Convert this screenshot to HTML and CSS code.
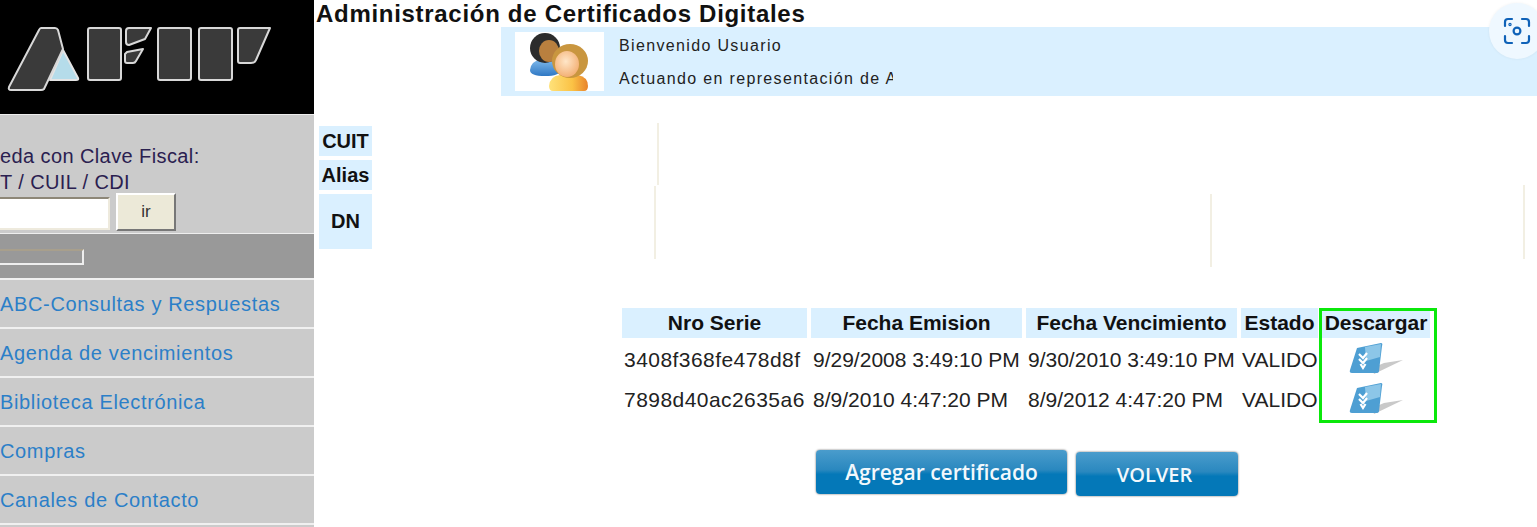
FILE: index.html
```html
<!DOCTYPE html>
<html lang="es">
<head>
    <meta charset="UTF-8">
    <title>Administración de Certificados Digitales</title>
    <link rel="stylesheet" href="styles.css">
</head>
<body>
    <div class="page">
        <aside class="sidebar">
            <div class="logo">
                <svg width="290" height="114" viewBox="0 0 290 114">
                    <g fill="#3a3a3a" stroke="#d8d8d8" stroke-width="2" stroke-linejoin="round">
                        <path d="M63 50L78 78Q79 80 76 80H50Z" fill="#b5dcea" stroke="#e4e4e4"/>
                        <path d="M41 28H55Q57 28 58 30L63 49L44 89Q43 90 41 90H11Q8 90 9 87L39 30Q40 28 41 28Z"/>
                        <path d="M90 28H119Q121 28 121 30V78Q121 80 119 80H90Q88 80 88 78V30Q88 28 90 28Z"/>
                        <path d="M129 28H151L145 39L129 45Q126 45 126 42V31Q126 28 129 28Z"/>
                        <path d="M127 52L143 49L136 61Q135 63 133 63H127Q125 63 125 61V54Z"/>
                        <path d="M160 28H189Q191 28 191 30V78Q191 80 189 80H160Q158 80 158 78V30Q158 28 160 28Z"/>
                        <path d="M201 28H230Q232 28 232 30V78Q232 80 230 80H201Q199 80 199 78V30Q199 28 201 28Z"/>
                        <path d="M240 28H270L256 60Q255 63 251 63H240Q238 63 238 61V30Q238 28 240 28Z"/>
                    </g>
                </svg>
            </div>
            <form class="search">
                <div class="search-label">eda con Clave Fiscal:</div>
                <div class="search-label">T / CUIL / CDI</div>
                <div class="search-row">
                    <input class="search-input" type="text">
                    <button class="search-btn" type="button">ir</button>
                </div>
            </form>
            <div class="band"><div class="band-field"></div></div>
            <nav class="menu">
                <a class="menu-item">ABC-Consultas y Respuestas</a>
                <a class="menu-item">Agenda de vencimientos</a>
                <a class="menu-item">Biblioteca Electrónica</a>
                <a class="menu-item">Compras</a>
                <a class="menu-item">Canales de Contacto</a>
                <a class="menu-item"></a>
            </nav>
        </aside>

        <main class="content">
            <h1 class="title">Administración de Certificados Digitales</h1>
            <div class="welcome">
                <div class="avatar">
                    <svg width="64" height="59" viewBox="0 0 64 59">
                        <defs>
                            <linearGradient id="blueBody" x1="0" y1="0" x2="0" y2="1">
                                <stop offset="0" stop-color="#7db8ea"/>
                                <stop offset="1" stop-color="#2f78c4"/>
                            </linearGradient>
                            <linearGradient id="orangeBody" x1="0" y1="0" x2="1" y2="0">
                                <stop offset="0" stop-color="#ffe27a"/>
                                <stop offset="0.6" stop-color="#fbc245"/>
                                <stop offset="1" stop-color="#e8822a"/>
                            </linearGradient>
                            <radialGradient id="skin" cx="0.45" cy="0.4" r="0.7">
                                <stop offset="0" stop-color="#ffe6c8"/>
                                <stop offset="1" stop-color="#f2a868"/>
                            </radialGradient>
                        </defs>
                        <path d="M4 38Q5 29 14 28H26Q34 30 34 38Q34 44 19 44Q4 44 4 38Z" fill="url(#blueBody)"/>
                        <ellipse cx="19" cy="16" rx="15" ry="15" fill="#2c2c2c"/>
                        <ellipse cx="23" cy="19" rx="10" ry="11" fill="#b9803f"/>
                        <path d="M27 59Q23 59 23 54Q24 44 34 43H52Q62 45 62 54Q62 59 58 59Z" fill="url(#orangeBody)"/>
                        <ellipse cx="44" cy="29" rx="18" ry="17" fill="#c9963f"/>
                        <ellipse cx="41" cy="32" rx="12" ry="13" fill="url(#skin)"/>
                    </svg>
                </div>
                <div class="welcome-text">
                    <div>Bienvenido Usuario</div>
                    <div class="clip">Actuando en representación de A</div>
                </div>
            </div>

            <div class="info">
                <div class="info-labels">
                    <div class="info-label">CUIT</div>
                    <div class="info-label">Alias</div>
                    <div class="info-label info-label-dn">DN</div>
                </div>
                <div class="info-lines">
                    <span class="vline vline-a"></span>
                    <span class="vline vline-b"></span>
                    <span class="vline vline-c"></span>
                    <span class="vline vline-d"></span>
                </div>
            </div>

            <div class="certs">
                <table class="cert-table">
                    <thead>
                        <tr>
                            <th class="col-serie">Nro Serie</th>
                            <th class="col-fecha">Fecha Emision</th>
                            <th class="col-fecha">Fecha Vencimiento</th>
                            <th class="col-estado">Estado</th>
                            <th class="col-desc">Descargar</th>
                        </tr>
                    </thead>
                    <tbody>
                        <tr>
                            <td class="cell-serie">3408f368fe478d8f</td>
                            <td>9/29/2008 3:49:10 PM</td>
                            <td>9/30/2010 3:49:10 PM</td>
                            <td class="cell-estado">VALIDO</td>
                            <td class="cell-icon">
                                <svg width="56" height="34" viewBox="0 0 56 34">
                                    <path d="M26 31L55 17L36 20L24 25Z" fill="#c9c9c9"/>
                                    <path d="M9 5L33 0Q35 0 34 3L31 28Q31 30 28 30H4Q1 30 2 27Z" fill="#4e9fd3"/>
                                    <path d="M17 4L33 1L32 14L18 18Z" fill="#8cc6e8"/>
                                    <path d="M11 11L15 15L19 10M11 16L15 20L19 15M12.500 21L15 25L17.500 21" fill="none" stroke="#fff" stroke-width="2.200"/>
                                </svg>
                            </td>
                        </tr>
                        <tr>
                            <td class="cell-serie">7898d40ac2635a6</td>
                            <td>8/9/2010 4:47:20 PM</td>
                            <td>8/9/2012 4:47:20 PM</td>
                            <td class="cell-estado">VALIDO</td>
                            <td class="cell-icon">
                                <svg width="56" height="34" viewBox="0 0 56 34">
                                    <path d="M26 31L55 17L36 20L24 25Z" fill="#c9c9c9"/>
                                    <path d="M9 5L33 0Q35 0 34 3L31 28Q31 30 28 30H4Q1 30 2 27Z" fill="#4e9fd3"/>
                                    <path d="M17 4L33 1L32 14L18 18Z" fill="#8cc6e8"/>
                                    <path d="M11 11L15 15L19 10M11 16L15 20L19 15M12.500 21L15 25L17.500 21" fill="none" stroke="#fff" stroke-width="2.200"/>
                                </svg>
                            </td>
                        </tr>
                    </tbody>
                </table>
                <div class="highlight"></div>
            </div>

            <div class="actions">
                <button class="btn btn-add" type="button">Agregar certificado</button>
                <button class="btn btn-back" type="button">VOLVER</button>
            </div>
        </main>
    </div>

    <button class="capture" type="button" aria-label="capture">
        <svg width="28" height="28" viewBox="0 0 28 28" fill="none" stroke="#0f62b8" stroke-width="2.2" stroke-linecap="round">
            <path d="M2 9V5Q2 2 5 2H9M19 2H23Q26 2 26 5V9M26 19V23Q26 26 23 26H19M9 26H5Q2 26 2 23V19"/>
            <circle cx="14" cy="14" r="3.4"/>
            <circle cx="7" cy="7.5" r="0.6"/>
        </svg>
    </button>
</body>
</html>
```

FILE: styles.css
```css
html, body {
    margin: 0;
    padding: 0;
    height: 527px;
    overflow: hidden;
    background-color: #fff;
    font-family: "Liberation Sans", Arial, sans-serif;
    color: #111;
}

.page {
    display: flex;
    height: 527px;
}

/* left column */
.sidebar {
    width: 314px;
    flex-shrink: 0;
    overflow: hidden;
    background-color: #cbcbcb;
}

.logo {
    height: 114px;
    background-color: #000;
    border-bottom: 1px solid #eee;
}

.logo svg {
    display: block;
}

.search {
    height: 118px;
    padding-top: 28px;
    box-sizing: border-box;
    font-size: 20px;
    letter-spacing: 0.4px;
    color: #2a2050;
}

.search-label {
    line-height: 26px;
}

.search-row {
    display: flex;
    gap: 6px;
    margin-top: 2px;
}

.search-input {
    width: 110px;
    height: 33px;
    box-sizing: border-box;
    padding: 0;
    background-color: #fff;
    border: 2px solid #eeeadd;
    border-top-color: #8d8778;
    border-left: none;
}

.search-btn {
    width: 60px;
    height: 38px;
    margin-top: -4px;
    padding: 0;
    font-family: inherit;
    font-size: 17px;
    color: #333;
    background-color: #ece9d8;
    border: 2px solid #ece9d8;
    border-right-color: #777;
    border-bottom-color: #777;
    border-top-color: #fff;
    border-left-color: #fff;
}

.band {
    height: 45px;
    box-sizing: border-box;
    padding-top: 15px;
    background-color: #999;
    border-top: 1px solid #eee;
}

.band-field {
    width: 84px;
    height: 16px;
    box-sizing: border-box;
    border: 2px solid #eee;
    border-left: none;
    border-top-color: #a89f8c;
}

.menu-item {
    display: block;
    height: 47px;
    margin-top: 2px;
    line-height: 49px;
    background-color: #cbcbcb;
    box-shadow: 0 -2px 0 #f0f0f0;
    font-size: 20px;
    letter-spacing: 0.65px;
    color: #2b7fc8;
    white-space: nowrap;
}

/* right column */
.content {
    flex: 1;
    min-width: 0;
}

.title {
    margin: 0;
    height: 27px;
    padding-left: 2px;
    font-size: 24px;
    line-height: 27px;
    font-weight: bold;
    letter-spacing: 0.7px;
    white-space: nowrap;
}

.welcome {
    display: flex;
    height: 69px;
    margin-left: 187px;
    box-sizing: border-box;
    padding: 5px 0 0 14px;
    background-color: #daf0ff;
}

.avatar {
    display: flex;
    justify-content: flex-end;
    width: 89px;
    height: 59px;
    padding-right: 14px;
    box-sizing: border-box;
    background-color: #fff;
}

.welcome-text {
    width: 274px;
    padding: 4px 0 0 15px;
    font-size: 16px;
    letter-spacing: 1.35px;
    color: #222;
}

.welcome-text div {
    height: 33px;
    line-height: 20px;
}

.clip {
    overflow: hidden;
    white-space: nowrap;
}

.info {
    display: flex;
    height: 212px;
    box-sizing: border-box;
    padding: 30px 0 0 5px;
}

.info-labels {
    display: flex;
    flex-direction: column;
    gap: 4px;
    width: 53px;
    flex-shrink: 0;
}

.info-label {
    height: 30px;
    line-height: 30px;
    text-align: center;
    font-size: 20px;
    font-weight: bold;
    background-color: #daf0ff;
}

.info-label-dn {
    height: 55px;
    line-height: 54px;
}

.info-lines {
    position: relative;
    flex: 1;
}

.vline {
    position: absolute;
    width: 2px;
    background-color: #f2efe3;
}

.vline-a {
    left: 285px;
    top: -3px;
    height: 62px;
}

.vline-b {
    left: 282px;
    top: 60px;
    height: 73px;
}

.vline-c {
    left: 838px;
    top: 68px;
    height: 73px;
}

.vline-d {
    left: 1151px;
    top: 59px;
    height: 74px;
}

.certs {
    position: relative;
    margin-left: 304px;
    width: 820px;
}

.cert-table {
    border-collapse: separate;
    border-spacing: 4px 0;
    table-layout: fixed;
    width: 816px;
    font-size: 21px;
}

.cert-table th {
    height: 30px;
    padding: 0;
    font-weight: bold;
    white-space: nowrap;
    background-color: #daf0ff;
}

.cert-table td {
    height: 36px;
    padding: 4px 2px 0;
    white-space: nowrap;
    color: #222;
}

.cert-table .cell-serie {
    letter-spacing: 0.45px;
}

.cert-table .cell-estado {
    padding-left: 1px;
}

.col-serie { width: 185px; }
.col-fecha { width: 211px; }
.col-estado { width: 77px; }
.col-desc { width: 108px; }

.cert-table .cell-icon {
    padding: 4px 0 0;
    text-align: center;
}

.cell-icon svg {
    display: inline-block;
    vertical-align: middle;
}

.highlight {
    position: absolute;
    left: 701px;
    top: 0;
    width: 118px;
    height: 115px;
    box-sizing: border-box;
    border: 3px solid #0be80b;
}

.actions {
    display: flex;
    align-items: flex-start;
    gap: 9px;
    margin: 32px 0 0 502px;
}

.btn {
    padding: 0;
    height: 44px;
    font-family: "Open Sans", sans-serif;
    font-size: 21px;
    font-weight: 600;
    color: #f2f8fc;
    background: linear-gradient(#4a9ccc 0%, #2a88bf 45%, #0478b8 55%, #0478b8 100%);
    border: none;
    border-radius: 4px;
    box-shadow: 0 0 2px #555;
}

.btn-add {
    width: 251px;
}

.btn-back {
    width: 162px;
    margin-top: 2px;
    padding-right: 5px;
    font-size: 20px;
}

/* floating capture button */
.capture {
    position: absolute;
    left: 1489px;
    top: 3px;
    width: 56px;
    height: 56px;
    padding: 0 14px;
    display: flex;
    align-items: center;
    background-color: #eff8ff;
    border: none;
    border-radius: 50%;
    box-shadow: 0 0 3px rgba(0, 0, 0, 0.06);
}
```
